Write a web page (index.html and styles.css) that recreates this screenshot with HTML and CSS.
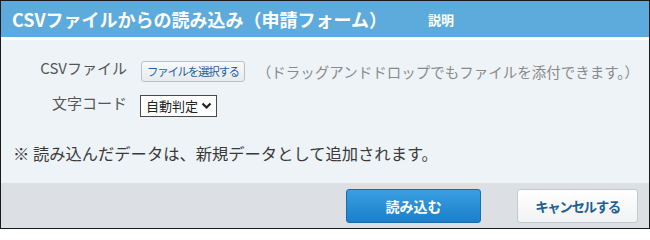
FILE: index.html
```html
<!DOCTYPE html>
<html lang="ja">
<head>
<meta charset="utf-8">
<title>CSVファイルからの読み込み</title>
<link rel="stylesheet" href="styles.css">
</head>
<body>
<div class="dialog">
  <div class="header">
    <span class="title">CSVファイルからの読み込み（申請フォーム）</span>
    <span class="help">説明</span>
  </div>
  <div class="content">
    <div class="form">
      <div class="label">CSVファイル</div>
      <div class="field">
        <span class="file-btn">ファイルを選択する</span>
        <span class="hint">（ドラッグアンドドロップでもファイルを添付できます。）</span>
      </div>
      <div class="label">文字コード</div>
      <div class="field">
        <span class="select">自動判定<svg class="chev" width="11" height="8" viewBox="0 0 11 8"><path d="M1.5 1.5 L5.5 5.5 L9.5 1.5" fill="none" stroke="#222" stroke-width="2.2"/></svg></span>
      </div>
    </div>
    <p class="note">※ 読み込んだデータは、新規データとして追加されます。</p>
  </div>
  <div class="footer">
    <span class="btn primary">読み込む</span>
    <span class="btn cancel">キャンセルする</span>
  </div>
</div>
</body>
</html>
```
FILE: styles.css
```css
html, body {
  margin: 0;
  padding: 0;
  background: #fff;
}
body {
  font-family: "Noto Sans CJK JP", "Noto Sans", sans-serif;
}
.dialog {
  width: 648px;
  height: 227px;
  border: 1px solid #1a1a1a;
  display: flex;
  flex-direction: column;
  background: #fff;
}
.header {
  height: 36px;
  background: #5dabdc;
  display: flex;
  align-items: center;
  padding-left: 11px;
  color: #fff;
}
.title {
  font-size: 18px;
  font-weight: bold;
  line-height: 22px;
}
.help {
  margin-left: 41px;
  font-size: 13px;
  font-weight: bold;
  line-height: 16px;
  margin-top: 1px;
}
.content {
  margin-top: 3px;
  background: #eef3f7;
  flex: 1;
  display: flex;
  flex-direction: column;
}
.form {
  display: grid;
  grid-template-columns: 126px 1fr;
  column-gap: 13px;
  row-gap: 13px;
  padding-top: 21px;
  align-items: center;
}
.label {
  text-align: right;
  font-size: 15px;
  color: #555;
  line-height: 18px;
  margin-top: -7px;
}
.field {
  display: flex;
  align-items: center;
}
.file-btn {
  margin-left: 1px;
  height: 19px;
  padding: 0 5px;
  border: 1px solid #b9c0c6;
  border-radius: 3px;
  background: linear-gradient(#f8f9fa, #e7ebee);
  color: #1d62a0;
  font-size: 11.5px;
  letter-spacing: -1.3px;
  line-height: 19px;
  display: flex;
  align-items: center;
}
.hint {
  margin-left: 12px;
  font-size: 14.5px;
  color: #8a8a8a;
  line-height: 18px;
}
.select {
  box-sizing: border-box;
  border: 1px solid #4a4a4a;
  background: #fff;
  font-size: 13px;
  color: #222;
  display: flex;
  align-items: center;
  padding-left: 5px;
  width: 77px;
  height: 22px;
  line-height: 16px;
}
.chev {
  margin-left: 3px;
}
.note {
  margin: 26px 0 0 12px;
  font-size: 16.3px;
  color: #3a3a3a;
  line-height: 20px;
}
.footer {
  height: 45px;
  background: #dce0e4;
  display: flex;
  justify-content: flex-end;
  align-items: flex-start;
  padding-top: 6px;
  padding-right: 11px;
  box-sizing: border-box;
  gap: 36px;
}
.btn {
  box-sizing: border-box;
  height: 34px;
  border-radius: 3px;
  font-size: 14px;
  font-weight: bold;
  display: flex;
  align-items: center;
  justify-content: center;
  line-height: 18px;
}
.primary {
  width: 135px;
  background: linear-gradient(#3a9ee0, #1b7fcb);
  border: 1px solid #1a6ca8;
  color: #fff;
}
.cancel {
  width: 121px;
  background: linear-gradient(#ffffff, #f1f2f3);
  border: 1px solid #c4c9ce;
  color: #1d5f96;
  font-size: 13.5px;
  letter-spacing: -1.4px;
}
```
